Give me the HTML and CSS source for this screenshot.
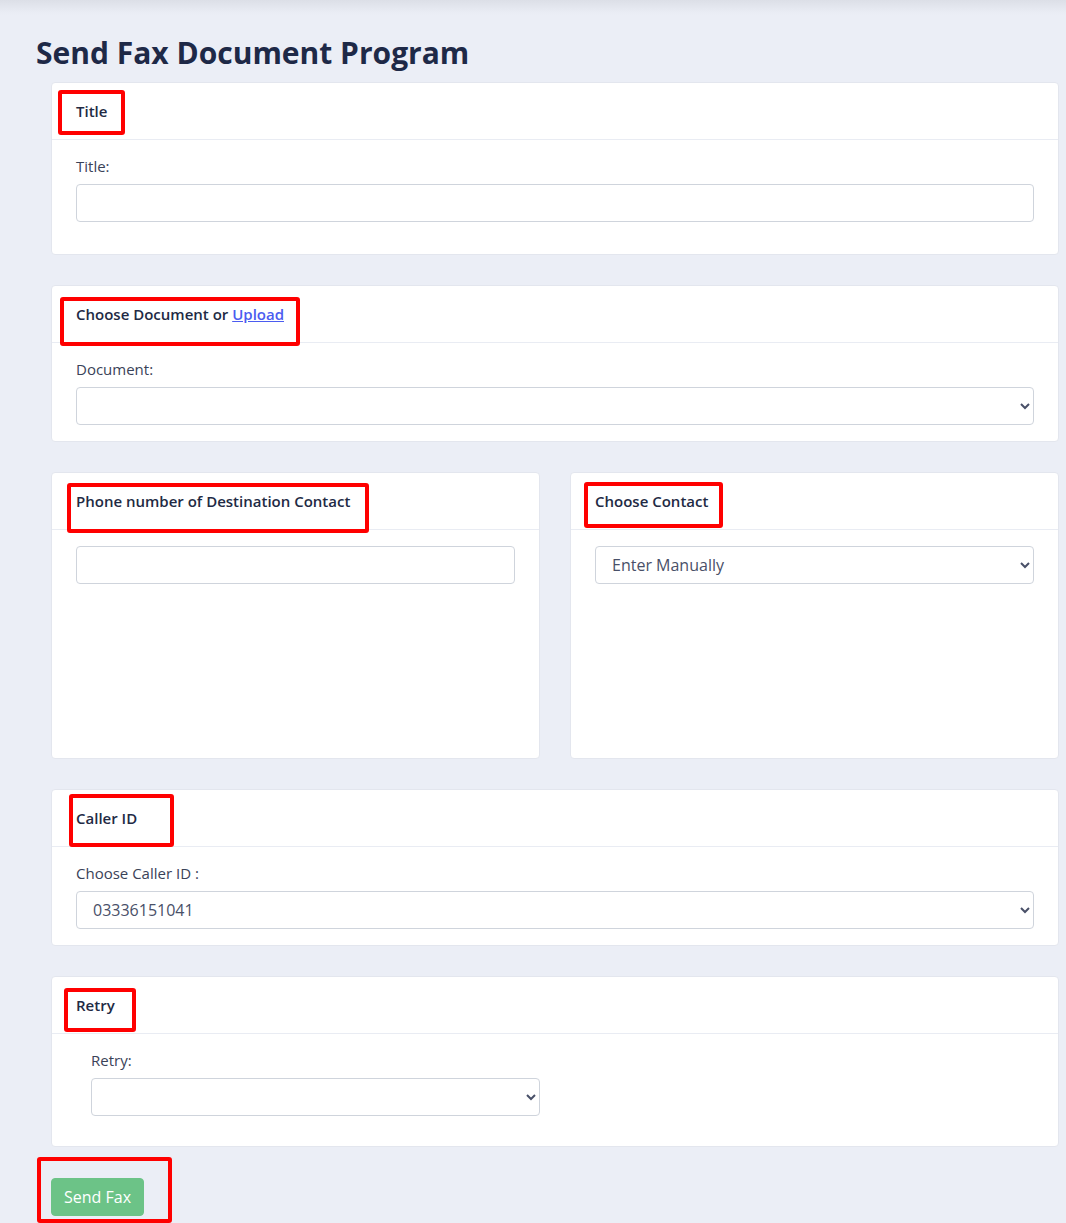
FILE: index.html
```html
<!DOCTYPE html>
<html lang="en">
<head>
<meta charset="utf-8">
<title>Send Fax Document Program</title>
<link rel="stylesheet" href="styles.css">
</head>
<body>
<div class="page">
  <h1 class="page-title">Send Fax Document Program</h1>
  <form class="fax-form">
    <section class="card">
      <div class="card-header">Title</div>
      <div class="card-body">
        <div class="form-group">
          <label class="form-label">Title:</label>
          <input class="form-control" type="text">
        </div>
      </div>
    </section>

    <section class="card">
      <div class="card-header">Choose Document or <a href="#" class="link">Upload</a></div>
      <div class="card-body">
        <label class="form-label">Document:</label>
        <select class="form-control form-select"><option></option></select>
      </div>
    </section>

    <div class="two-col">
      <section class="card card-tall">
        <div class="card-header">Phone number of Destination Contact</div>
        <div class="card-body">
          <input class="form-control" type="text">
        </div>
      </section>
      <section class="card card-tall">
        <div class="card-header">Choose Contact</div>
        <div class="card-body">
          <select class="form-control form-select"><option>Enter Manually</option></select>
        </div>
      </section>
    </div>

    <section class="card">
      <div class="card-header">Caller ID</div>
      <div class="card-body">
        <label class="form-label">Choose Caller ID :</label>
        <select class="form-control form-select"><option>03336151041</option></select>
      </div>
    </section>

    <section class="card card-last">
      <div class="card-header">Retry</div>
      <div class="card-body">
        <div class="form-group form-group-sm">
          <div class="half-col">
            <label class="form-label">Retry:</label>
            <select class="form-control form-select"><option></option></select>
          </div>
        </div>
      </div>
    </section>

    <button type="button" class="btn-send">Send Fax</button>
  </form>
</div>

<div class="mark mark-title"></div>
<div class="mark mark-doc"></div>
<div class="mark mark-phone"></div>
<div class="mark mark-contact"></div>
<div class="mark mark-caller"></div>
<div class="mark mark-retry"></div>
<div class="mark mark-send"></div>
</body>
</html>
```
FILE: styles.css
```css
* { box-sizing: border-box; }

html, body { height: 100%; }

body {
  margin: 0;
  position: relative;
  font-family: "Open Sans", "Noto Sans", "Liberation Sans", sans-serif;
  color: #2b3350;
  background: linear-gradient(#dcdfe7 0, #e9ecf4 12px, #ebeef6 16px) no-repeat, #ebeef6;
  background-size: 100% 16px, auto;
  min-height: 1223px;
  overflow: hidden;
}

.page {
  padding: 0 7px 0 36px;
}

.page-title {
  margin: 35px 0 11px;
  font-size: 30px;
  line-height: 36px;
  font-weight: 700;
  color: #1e2947;
}

.fax-form {
  padding-left: 15px;
}

.card {
  background: #fff;
  border: 1px solid #e3e6ee;
  border-radius: 4px;
  margin-bottom: 30px;
}

.card-last {
  margin-bottom: 0;
}

.card-header {
  padding: 17px 24px 16px;
  line-height: 23px;
  font-size: 15px;
  font-weight: 600;
  color: #222a44;
  border-bottom: 1px solid #e9ecf3;
}

.link {
  color: #4b5cf0;
  text-decoration: underline;
}

.card-body {
  padding: 16px 24px;
}

.form-group {
  margin-bottom: 16px;
}

.form-group-sm {
  margin-bottom: 14px;
}

.form-label {
  display: block;
  font-size: 15px;
  line-height: 21px;
  color: #3a4258;
  margin-bottom: 7px;
}

.form-control {
  display: block;
  width: 100%;
  height: 38px;
  padding: 6px 12px;
  font-family: inherit;
  font-size: 16px;
  color: #495068;
  background: #fff;
  border: 1px solid #cfd4dc;
  border-radius: 4px;
  outline: none;
}

.form-select {
  padding-left: 12px;
}

.two-col {
  display: grid;
  grid-template-columns: 1fr 1fr;
  column-gap: 30px;
}

.card-tall {
  height: 287px;
}

.half-col {
  width: 50%;
  padding: 0 15px;
}

.btn-send {
  display: block;
  margin-top: 31px;
  height: 38px;
  padding: 6px 12px;
  font-family: inherit;
  font-size: 16px;
  line-height: 24px;
  color: #fff;
  background: #6cc387;
  border: 1px solid #6cc387;
  border-radius: 4px;
}

/* annotation rectangles drawn over the screenshot */
.mark {
  position: absolute;
  border: 4px solid #ff0000;
  border-radius: 3px;
  pointer-events: none;
}
.mark-title   { left: 58px;  top: 90px;   width: 67px;  height: 45px; }
.mark-doc     { left: 60px;  top: 297px;  width: 240px; height: 49px; }
.mark-phone   { left: 67px;  top: 483px;  width: 302px; height: 50px; }
.mark-contact { left: 584px; top: 482px;  width: 139px; height: 46px; }
.mark-caller  { left: 69px;  top: 794px;  width: 105px; height: 53px; }
.mark-retry   { left: 64px;  top: 988px;  width: 72px;  height: 44px; }
.mark-send    { left: 37px;  top: 1157px; width: 135px; height: 66px; }
```
